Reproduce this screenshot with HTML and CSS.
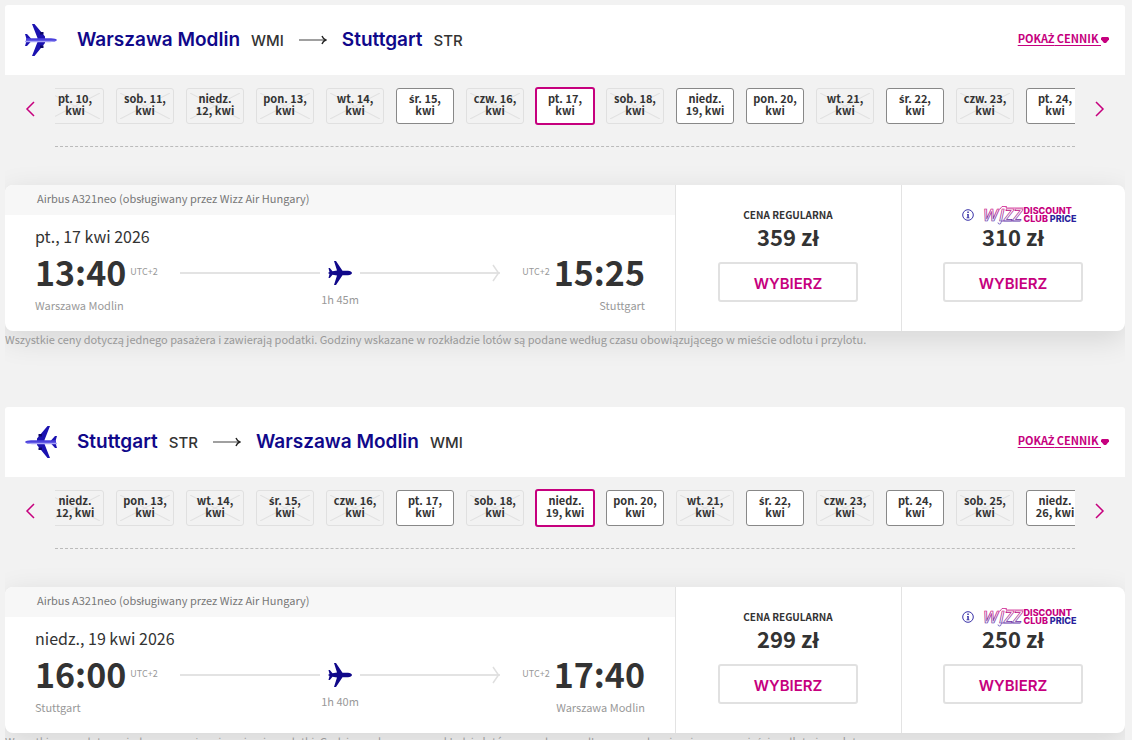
FILE: index.html
```
<!DOCTYPE html>
<html lang="pl">
<head>
    <meta charset="UTF-8">
    <meta name="viewport" content="width=device-width, initial-scale=1.0">
    <title>Wybierz lot</title>
    <link rel="stylesheet" href="styles.css">
</head>
<body>
    <svg class="sprite" aria-hidden="true">
        <defs>
            <linearGradient id="wizz" gradientUnits="userSpaceOnUse" x1="0" y1="0" x2="0" y2="20">
                <stop offset="0.2" stop-color="#c6007e"/>
                <stop offset="1" stop-color="#3a32b0"/>
            </linearGradient>
            <symbol id="plane-color" viewBox="0 0 32 32">
                <path fill="#1b12b0" d="M7 0h2.500L20 12.500V19L9.500 32H7l5.500-14v-4z"/>
                <path fill="#1b12b0" d="M0 10h2l4 4.500v3L2 22H0l1.500-5v-2z"/>
                <path fill="#0c0668" d="M15 8h3.500v2.500H15zM15 21.500h3.500V24H15z"/>
                <path fill="#4a40dc" d="M1 14.200h25c3 0 5.500.8 6 1.800-.5 1.200-3 2-6 2H1z"/>
                <path fill="#a8a4f6" d="M0 16.800h31c-1.500.9-3.500 1.400-6 1.400H0z"/>
            </symbol>
            <symbol id="plane" viewBox="0 0 24 24">
                <path fill="#10088a" d="M6 0h2l6.500 9.800H20c2.200 0 4 1.100 4 2.200s-1.800 2.200-4 2.200h-5.500L8 24H6l3-9.500-4.500-.7L1.800 17H.5l1-4L0 12l1.500-1-1-4h1.300l2.700 3.200 4.500-.7z"/>
            </symbol>
            <symbol id="arrow" viewBox="0 0 28 10">
                <path fill="none" stroke="#777" stroke-width="1.400" d="M0 5h26"/>
                <path fill="none" stroke="#222" stroke-width="1.400" d="M23 1c.8 2 2 3.400 3.800 4C25 5.600 23.800 7 23 9"/>
            </symbol>
            <symbol id="left" viewBox="0 0 10 16">
                <path fill="none" stroke="#c6007e" stroke-width="1.500" d="M9 1L2 8l7 7"/>
            </symbol>
            <symbol id="right" viewBox="0 0 10 16">
                <path fill="none" stroke="#c6007e" stroke-width="1.500" d="M1 1l7 7-7 7"/>
            </symbol>
            <symbol id="caret" viewBox="0 0 8 6">
                <path fill="#c6007e" d="M1 0h6l1 1v1.500L5 6H3L0 2.500V1z"/>
            </symbol>
            <symbol id="head" viewBox="0 0 8 18">
                <path fill="none" stroke="#dfdfdf" stroke-width="1.500" d="M1 1l5.500 8L1 17"/>
            </symbol>
            <symbol id="info" viewBox="0 0 12 12">
                <circle cx="6" cy="6" r="5.300" fill="none" stroke="#3a32a8"/>
                <path fill="#3a32a8" d="M5.300 2.500h1.500V4H5.300zM5 5h1.800v3.500h.7v.8h-3v-.8h.8V5.800H5z"/>
            </symbol>
        </defs>
    </svg>

    <section class="flight">
        <header class="route">
            <svg class="route-plane"><use href="#plane-color"/></svg>
            <h2 class="cities">
                <span class="city">Warszawa Modlin</span>
                <span class="code">WMI</span>
                <svg class="route-arrow"><use href="#arrow"/></svg>
                <span class="city">Stuttgart</span>
                <span class="code">STR</span>
            </h2>
            <div class="fares"><a href="#">POKA<span class="accent">Ż</span> CENNIK </a><svg class="caret"><use href="#caret"/></svg></div>
        </header>
        <div class="strip">
            <button class="nav" aria-label="Poprzednie dni"><svg><use href="#left"/></svg></button>
            <div class="dates">
                <button class="date" disabled>pt. 10,<br>kwi</button>
                <button class="date" disabled>sob. 11,<br>kwi</button>
                <button class="date" disabled>niedz.<br>12, kwi</button>
                <button class="date" disabled>pon. 13,<br>kwi</button>
                <button class="date" disabled>wt. 14,<br>kwi</button>
                <button class="date"><span class="accent">ś</span>r. 15,<br>kwi</button>
                <button class="date" disabled>czw. 16,<br>kwi</button>
                <button class="date selected">pt. 17,<br>kwi</button>
                <button class="date" disabled>sob. 18,<br>kwi</button>
                <button class="date">niedz.<br>19, kwi</button>
                <button class="date">pon. 20,<br>kwi</button>
                <button class="date" disabled>wt. 21,<br>kwi</button>
                <button class="date"><span class="accent">ś</span>r. 22,<br>kwi</button>
                <button class="date" disabled>czw. 23,<br>kwi</button>
                <button class="date">pt. 24,<br>kwi</button>
            </div>
            <button class="nav" aria-label="Następne dni"><svg><use href="#right"/></svg></button>
        </div>
        <div class="card">
            <div class="info">
                <p class="operator">Airbus A321neo (obsługiwany przez Wizz Air Hungary)</p>
                <div class="details">
                    <p class="day">pt., 17 kwi 2026</p>
                    <div class="times">
                        <div class="stop">
                            <p class="clock"><b>13:40</b><small>UTC+2</small></p>
                            <p class="airport">Warszawa Modlin</p>
                        </div>
                        <div class="path">
                            <div class="track">
                                <span class="line"></span>
                                <svg class="plane"><use href="#plane"/></svg>
                                <span class="line"></span>
                                <svg class="head"><use href="#head"/></svg>
                            </div>
                            <p class="duration">1h 45m</p>
                        </div>
                        <div class="stop end">
                            <p class="clock"><small>UTC+2</small><b>15:25</b></p>
                            <p class="airport">Stuttgart</p>
                        </div>
                    </div>
                </div>
            </div>
            <div class="price">
                <p class="label">CENA REGULARNA</p>
                <p class="amount">359 zł</p>
                <button class="select">WYBIERZ</button>
            </div>
            <div class="price">
                <div class="label club">
                    <svg class="info-icon"><use href="#info"/></svg>
                    <svg class="wizz" viewBox="0 0 40 20">
                        <text x="-1" y="16">W</text>
                        <text x="15" y="16">IZZ</text>
                        <path d="M16 4l2-2.500h4.500L22 3h17.500M14 17.500a1.500 1.500 0 1 0 3 0l1-1.500h18"/>
                    </svg>
                    <p class="club-name">DISCOUNT<br>CLUB <span>PRICE</span></p>
                </div>
                <p class="amount">310 zł</p>
                <button class="select">WYBIERZ</button>
            </div>
        </div>
        <p class="note">Wszystkie ceny dotyczą jednego pasa<span class="accent">ż</span>era i zawierają podatki. Godziny wskazane w rozkładzie lotów są podane według czasu obowiązującego w mie<span class="accent">ś</span>cie odlotu i przylotu.</p>
    </section>

    <section class="flight">
        <header class="route">
            <svg class="route-plane back"><use href="#plane-color"/></svg>
            <h2 class="cities">
                <span class="city">Stuttgart</span>
                <span class="code">STR</span>
                <svg class="route-arrow"><use href="#arrow"/></svg>
                <span class="city">Warszawa Modlin</span>
                <span class="code">WMI</span>
            </h2>
            <div class="fares"><a href="#">POKA<span class="accent">Ż</span> CENNIK </a><svg class="caret"><use href="#caret"/></svg></div>
        </header>
        <div class="strip">
            <button class="nav" aria-label="Poprzednie dni"><svg><use href="#left"/></svg></button>
            <div class="dates">
                <button class="date" disabled>niedz.<br>12, kwi</button>
                <button class="date" disabled>pon. 13,<br>kwi</button>
                <button class="date" disabled>wt. 14,<br>kwi</button>
                <button class="date" disabled><span class="accent">ś</span>r. 15,<br>kwi</button>
                <button class="date" disabled>czw. 16,<br>kwi</button>
                <button class="date">pt. 17,<br>kwi</button>
                <button class="date" disabled>sob. 18,<br>kwi</button>
                <button class="date selected">niedz.<br>19, kwi</button>
                <button class="date">pon. 20,<br>kwi</button>
                <button class="date" disabled>wt. 21,<br>kwi</button>
                <button class="date"><span class="accent">ś</span>r. 22,<br>kwi</button>
                <button class="date" disabled>czw. 23,<br>kwi</button>
                <button class="date">pt. 24,<br>kwi</button>
                <button class="date" disabled>sob. 25,<br>kwi</button>
                <button class="date">niedz.<br>26, kwi</button>
            </div>
            <button class="nav" aria-label="Następne dni"><svg><use href="#right"/></svg></button>
        </div>
        <div class="card">
            <div class="info">
                <p class="operator">Airbus A321neo (obsługiwany przez Wizz Air Hungary)</p>
                <div class="details">
                    <p class="day">niedz., 19 kwi 2026</p>
                    <div class="times">
                        <div class="stop">
                            <p class="clock"><b>16:00</b><small>UTC+2</small></p>
                            <p class="airport">Stuttgart</p>
                        </div>
                        <div class="path">
                            <div class="track">
                                <span class="line"></span>
                                <svg class="plane"><use href="#plane"/></svg>
                                <span class="line"></span>
                                <svg class="head"><use href="#head"/></svg>
                            </div>
                            <p class="duration">1h 40m</p>
                        </div>
                        <div class="stop end">
                            <p class="clock"><small>UTC+2</small><b>17:40</b></p>
                            <p class="airport">Warszawa Modlin</p>
                        </div>
                    </div>
                </div>
            </div>
            <div class="price">
                <p class="label">CENA REGULARNA</p>
                <p class="amount">299 zł</p>
                <button class="select">WYBIERZ</button>
            </div>
            <div class="price">
                <div class="label club">
                    <svg class="info-icon"><use href="#info"/></svg>
                    <svg class="wizz" viewBox="0 0 40 20">
                        <text x="-1" y="16">W</text>
                        <text x="15" y="16">IZZ</text>
                        <path d="M16 4l2-2.500h4.500L22 3h17.500M14 17.500a1.500 1.500 0 1 0 3 0l1-1.500h18"/>
                    </svg>
                    <p class="club-name">DISCOUNT<br>CLUB <span>PRICE</span></p>
                </div>
                <p class="amount">250 zł</p>
                <button class="select">WYBIERZ</button>
            </div>
        </div>
        <p class="note">Wszystkie ceny dotyczą jednego pasa<span class="accent">ż</span>era i zawierają podatki. Godziny wskazane w rozkładzie lotów są podane według czasu obowiązującego w mie<span class="accent">ś</span>cie odlotu i przylotu.</p>
    </section>
</body>
</html>
```
FILE: styles.css
```
* {
    box-sizing: border-box;
}
body {
    margin: 5px 7px 0 5px;
    background-color: #f2f2f2;
    color: #333;
    font-family: "Noto Sans CJK SC", "Noto Sans", sans-serif;
    font-size: 11px;
    line-height: 18px;
}
p, h2 {
    margin: 0;
}
svg {
    display: block;
    flex: none;
}
button {
    font-family: inherit;
    padding: 0;
    cursor: pointer;
}
.sprite {
    position: absolute;
    width: 0;
    height: 0;
}
.accent {
    font-family: "Open Sans", sans-serif;
    line-height: 0;
}
.flight {
    margin-bottom: 60px;
}

/* route header */
.route {
    display: flex;
    align-items: center;
    gap: 20px;
    height: 70px;
    padding: 0 16px 0 20px;
    background-color: #fff;
    border-radius: 3px 3px 0 0;
}
.route-plane {
    width: 32px;
    height: 32px;
}
.back {
    transform: scaleX(-1);
}
.cities {
    display: flex;
    align-items: baseline;
    flex: 1;
    font-family: Inter, sans-serif;
    line-height: 24px;
}
.city {
    color: #10088a;
    font-size: 19px;
    font-weight: 600;
}
.code {
    margin-left: 11px;
    font-size: 15px;
    font-weight: 500;
}
.route-arrow {
    width: 28px;
    height: 10px;
    margin: 0 15px;
    align-self: center;
}
.fares {
    display: flex;
    align-items: center;
    font-weight: bold;
}
.fares a {
    padding-bottom: 4px;
    color: #c6007e;
    text-underline-offset: 2px;
    white-space: pre;
}
.caret {
    width: 8px;
    height: 6px;
}

/* dates */
.strip {
    display: flex;
    align-items: flex-start;
    padding-top: 12px;
}
.nav {
    display: flex;
    justify-content: center;
    align-items: center;
    width: 50px;
    height: 44px;
    border: none;
    background: none;
}
.nav svg {
    width: 10px;
    height: 16px;
}
.dates {
    display: flex;
    flex: 1;
    justify-content: center;
    align-items: center;
    gap: 12px;
    height: 60px;
    padding-bottom: 21px;
    border-bottom: 1px dashed #bbb;
    overflow: hidden;
}
.date {
    flex: none;
    width: 58px;
    height: 36px;
    padding-bottom: 4px;
    border: 1px solid #888;
    border-radius: 3px;
    background-color: #fff;
    color: #333;
    font-size: 11px;
    font-weight: bold;
    line-height: 12px;
}
.date:disabled {
    border-color: #e0e0e0;
    background: linear-gradient(to top right, transparent calc(50% - 1px), #e0e0e0, transparent calc(50% + 1px)) center / 50px 26px no-repeat border-box,
        linear-gradient(to bottom right, transparent calc(50% - 1px), #e0e0e0, transparent calc(50% + 1px)) center / 50px 26px no-repeat border-box;
    cursor: default;
}
.selected {
    width: 60px;
    height: 38px;
    margin: 0 -1px;
    border: 2px solid #c6007e;
}

/* flight card */
.card {
    display: grid;
    grid-template-columns: 1fr 226px 224px;
    margin-top: 38px;
    border-radius: 8px;
    background-color: #fff;
    box-shadow: 0 8px 30px rgba(0, 0, 0, 0.12);
}
.operator {
    height: 30px;
    padding-left: 32px;
    border-radius: 8px 0 0 0;
    background-color: #f7f7f7;
    color: #777;
    line-height: 26px;
}
.details {
    padding: 9px 30px 17px;
}
.day {
    font-size: 16px;
    line-height: 24px;
}
.times {
    display: flex;
    gap: 22px;
}
.clock {
    display: flex;
    align-items: center;
    gap: 4px;
    height: 48px;
}
.clock b {
    font-size: 34px;
}
.clock small {
    color: #999;
    font-size: 9px;
}
.airport, .duration, .note {
    color: #999;
}
.end {
    text-align: right;
}
.path {
    flex: 1;
    padding-top: 10px;
    text-align: center;
}
.track {
    display: flex;
    align-items: center;
    height: 30px;
    margin-bottom: 2px;
}
.line {
    flex: 1;
    height: 2px;
    background-color: #e3e3e3;
}
.plane {
    width: 24px;
    height: 26px;
    margin: 0 8px;
}
.head {
    width: 8px;
    height: 18px;
    margin-left: -8px;
}
.note {
    line-height: 16px;
}

/* prices */
.price {
    display: flex;
    flex-direction: column;
    align-items: center;
    padding: 22px 1px 0 0;
    border-left: 1px solid #e3e3e3;
}
.label {
    font-size: 10px;
    font-weight: bold;
    line-height: 16px;
}
.amount {
    font-size: 22px;
    font-weight: bold;
    line-height: 27px;
}
.select {
    width: 140px;
    height: 40px;
    margin-top: 12px;
    padding-top: 3px;
    border: 2px solid #e1e1e1;
    border-radius: 3px;
    background-color: #fff;
    color: #c6007e;
    font-family: Inter, sans-serif;
    font-size: 15px;
    font-weight: 600;
}
.club {
    display: flex;
    align-items: center;
    height: 16px;
    padding-left: 12px;
}
.info-icon {
    width: 12px;
    height: 12px;
    margin-right: 10px;
}
.wizz {
    width: 40px;
    height: 20px;
    overflow: visible;
    fill: none;
    stroke: url(#wizz);
    stroke-width: 0.7;
    font: italic 600 17px "Open Sans", sans-serif;
}
.club-name {
    color: #c6007e;
    font-family: Inter, sans-serif;
    font-size: 9px;
    font-weight: 800;
    line-height: 8px;
}
.club-name span {
    color: #2a1f9c;
}
```
